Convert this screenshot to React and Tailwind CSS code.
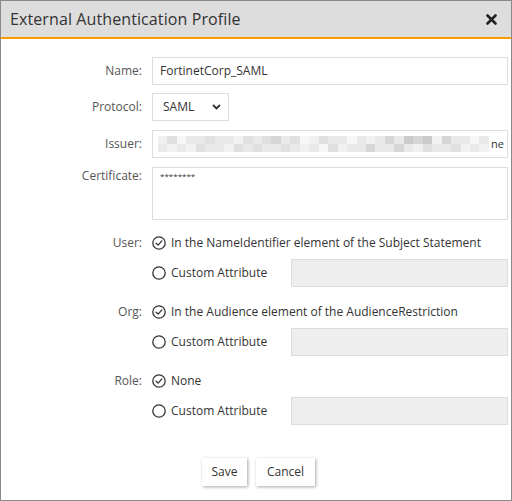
import React from 'react';

const mosaicTones = [
  'bg-[#f1f1f1]', 'bg-[#e0e0e0]', 'bg-[#e9e9e9]', 'bg-[#d6d6d6]', 'bg-[#f7f7f7]', 'bg-[#cbcbcb]',
];

// pixelated issuer value: two rows of tone indexes
const mosaicRows = [
  [0, 1, 4, 2, 2, 1, 2, 2, 0, 1, 2, 1, 3, 2, 1, 4, 0, 1, 2, 2, 4, 2, 0, 2, 3, 2, 5, 3, 5, 0, 3, 2, 2, 4, 2],
  [2, 0, 2, 0, 1, 2, 2, 0, 1, 2, 1, 2, 2, 1, 2, 0, 2, 4, 1, 0, 2, 2, 3, 2, 2, 3, 2, 0, 1, 2, 2, 1, 0, 2, 0],
];

function CheckCircle({ checked }) {
  return (
    <svg width="14" height="14" viewBox="0 0 14 14" className="shrink-0">
      <circle cx="7" cy="7" r="6.2" fill="white" stroke="#333" strokeWidth="1.3" />
      {checked && <path d="M4.1 7.2 L6.1 9.1 L9.9 4.9" fill="none" stroke="#333" strokeWidth="1.3" strokeLinecap="round" strokeLinejoin="round" />}
    </svg>
  );
}

function Label({ children }) {
  return <div className="w-[142px] shrink-0 pr-[1px] text-right text-[#555]">{children}</div>;
}

function Row({ label, className, children }) {
  return (
    <div className={`flex ${className}`}>
      <Label>{label}</Label>
      <div className="ml-[9px] flex-1">{children}</div>
    </div>
  );
}

function Choice({ label, checked }) {
  return (
    <div className="flex h-[22px] items-center gap-[5px] text-[#333]">
      <CheckCircle checked={checked} />
      <span>{label}</span>
    </div>
  );
}

function AttributeGroup({ label, defaultText, first }) {
  return (
    <>
      <div className={`flex items-center ${first ? 'mt-[12px]' : 'mt-[14px]'}`}>
        <Label>{label}</Label>
        <div className="ml-[9px]">
          <Choice label={defaultText} checked />
        </div>
      </div>
      <div className="mt-[5px] flex items-center pl-[151px]">
        <div className="w-[139px]">
          <Choice label="Custom Attribute" />
        </div>
        <div className="h-[28px] flex-1 border border-[#dcdcdc] bg-[#eeeeee]" />
      </div>
    </>
  );
}

export default function App() {
  return (
    <div className="h-[501px] w-[512px] overflow-hidden border border-[#8a8a8a] bg-white text-[12px] font-['Open_Sans',sans-serif]">
      <div className="flex h-[38px] items-center justify-between border-b-2 border-[#ff9900] bg-[#dddddd] pl-[9px] pr-[14px]">
        <h1 className="text-[16px] text-[#333] tracking-[0.1px]">External Authentication Profile</h1>
        <svg width="11" height="11" viewBox="0 0 11 11">
          <path d="M1.5 1.5 L9.5 9.5 M9.5 1.5 L1.5 9.5" stroke="#222" strokeWidth="2.6" strokeLinecap="round" />
        </svg>
      </div>

      <div className="flex flex-col pr-[3px]">
        <Row label="Name:" className="mt-[18px] items-center">
          <div className="flex h-[28px] items-center border border-[#dddddd] px-[7px] text-[#333]">FortinetCorp_SAML</div>
        </Row>

        <Row label="Protocol:" className="mt-[8px] items-center">
          <div className="flex h-[28px] w-[77px] items-center justify-between border border-[#dddddd] pl-[10px] pr-[7px] text-[#333]">
            <span>SAML</span>
            <svg width="9" height="6" viewBox="0 0 9 6">
              <path d="M1 1 L4.5 4.5 L8 1" fill="none" stroke="#333" strokeWidth="1.8" />
            </svg>
          </div>
        </Row>

        <Row label="Issuer:" className="mt-[9px] items-center">
          <div className="flex h-[28px] items-center overflow-hidden border border-[#dddddd] pl-[5px] text-[#333]">
            <div className="flex w-[331px] shrink-0 flex-col">
              {mosaicRows.map((row, r) => (
                <div key={r} className="flex h-[8px]">
                  {row.map((t, i) => (
                    <div key={i} className={`h-full flex-1 ${mosaicTones[t]}`} />
                  ))}
                </div>
              ))}
            </div>
            <span className="ml-[2px] text-[11px]">ne</span>
          </div>
        </Row>

        <Row label="Certificate:" className="mt-[9px] items-start">
          <div className="h-[53px] border border-[#dddddd] px-[7px] pt-[1px] text-[8px] leading-[14px] text-[#333]">********</div>
        </Row>

        <AttributeGroup first label="User:" defaultText="In the NameIdentifier element of the Subject Statement" />
        <AttributeGroup label="Org:" defaultText="In the Audience element of the AudienceRestriction" />
        <AttributeGroup label="Role:" defaultText="None" />

        <div className="mt-[33px] flex gap-[9px] pl-[201px]">
          <button className="h-[28px] w-[45px] bg-white text-[#333] shadow-[1px_1px_3px_rgba(0,0,0,0.35)]">Save</button>
          <button className="h-[28px] w-[59px] bg-white text-[#333] shadow-[1px_1px_3px_rgba(0,0,0,0.35)]">Cancel</button>
        </div>
      </div>
    </div>
  );
}
